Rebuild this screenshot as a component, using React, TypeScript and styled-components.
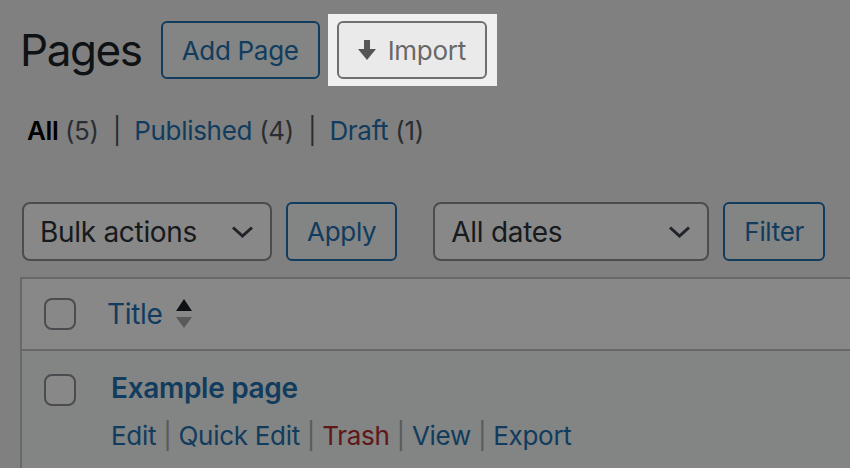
import styled, { createGlobalStyle } from "styled-components";

const GlobalStyle = createGlobalStyle`
  html, body {
    margin: 0;
    padding: 0;
    background: #f0f0f1;
    font-family: Inter, "Noto Sans", "Liberation Sans", sans-serif;
    letter-spacing: -0.3px;
    color: #3c434a;
  }
`;

const Wrap = styled.div`
  width: 850px;
  height: 468px;
  padding-left: 20px;
  box-sizing: border-box;
  overflow: hidden;
`;

const Header = styled.div`
  display: flex;
  align-items: center;
  margin-top: 14px;
  height: 72px;
`;

const Title = styled.h1`
  margin: 0 19px 0 0;
  font-size: 44px;
  font-weight: 400;
  color: #1d2327;
  letter-spacing: -1.4px;
  line-height: 58px;
`;

const ActionButton = styled.a`
  display: inline-flex;
  align-items: center;
  gap: 12px;
  height: 58px;
  box-sizing: border-box;
  padding: 0 19px;
  border: 2px solid #2271b1;
  border-radius: 6px;
  background: #f6f7f7;
  color: #2271b1;
  font-size: 26px;
  text-decoration: none;
`;

/* the one control left out of the dimmed page */
const Spotlight = styled.div`
  position: relative;
  z-index: 1;
  margin-left: 8px;
  padding: 7px 10px 7px 9px;
  background: #f0f0f1;
  box-shadow: 0 0 0 3000px rgba(0, 0, 0, 0.465);
`;

const ImportButton = styled(ActionButton)`
  border-color: #707070;
  background: #eaeaea;
  color: #686868;
`;

const Views = styled.ul`
  list-style: none;
  margin: 25px 0 0 7px;
  padding: 0;
  display: flex;
  font-size: 26px;
  line-height: 40px;
`;

const View = styled.li`
  white-space: nowrap;
`;

const ViewLink = styled.a<{ $current?: boolean }>`
  color: ${(p) => (p.$current ? "#000" : "#2271b1")};
  font-weight: ${(p) => (p.$current ? 600 : 400)};
  text-decoration: none;
`;

const Count = styled.span`
  color: #50575e;
  font-weight: 400;
`;

const ViewSep = styled.span`
  color: #50575e;
  padding: 0 13px 0 14px;
`;

const TableNav = styled.div`
  display: flex;
  align-items: center;
  margin: 51px 0 0 2px;
  height: 59px;
`;

const NavGroup = styled.div`
  display: flex;
  gap: 14px;
  margin-right: 36px;
`;

const Select = styled.div<{ $width: number }>`
  display: flex;
  align-items: center;
  justify-content: space-between;
  width: ${(p) => p.$width}px;
  height: 59px;
  box-sizing: border-box;
  padding: 0 16px;
  border: 2px solid #8c8f94;
  border-radius: 8px;
  background: #fff;
  color: #2c3338;
  font-size: 28px;
`;

const NavButton = styled(ActionButton)`
  height: 59px;
`;

const Table = styled.div`
  margin-top: 16px;
  width: 1000px;
  border: 2px solid #c3c4c7;
`;

const HeadRow = styled.div`
  display: flex;
  align-items: center;
  height: 70px;
  background: #fff;
  border-bottom: 2px solid #c3c4c7;
`;

const BodyRow = styled.div`
  display: flex;
  align-items: flex-start;
  height: 140px;
  background: #f6f7f7;
`;

const CheckCell = styled.div<{ $top?: number }>`
  width: 85px;
  padding: ${(p) => p.$top ?? 0}px 0 0 22px;
  box-sizing: border-box;
  flex-shrink: 0;
`;

const Checkbox = styled.span`
  display: block;
  width: 32px;
  height: 32px;
  box-sizing: border-box;
  border: 2px solid #8c8f94;
  border-radius: 8px;
  background: #fff;
`;

const SortLink = styled.a`
  display: flex;
  align-items: center;
  gap: 13px;
  color: #2271b1;
  font-size: 28px;
  text-decoration: none;
`;

const TitleCell = styled.div`
  padding: 17px 0 0 4px;
`;

const RowTitle = styled.a`
  display: block;
  color: #2271b1;
  font-size: 28px;
  font-weight: 600;
  line-height: 40px;
  text-decoration: none;
`;

const RowActions = styled.div`
  margin-top: 8px;
  font-size: 26px;
  line-height: 40px;
  color: #a7aaad;
  white-space: nowrap;
`;

const RowLink = styled.a<{ $danger?: boolean }>`
  color: ${(p) => (p.$danger ? "#b32d2e" : "#2271b1")};
  text-decoration: none;
`;

const RowSep = styled.span`
  padding: 0 7px;
`;

const Chevron = () => (
  <svg width="23" height="12" viewBox="0 0 23 12">
    <polyline points="2,1.5 11.5,10 21,1.5" fill="none" stroke="#3c434a" strokeWidth="3" />
  </svg>
);

const DownArrow = () => (
  <svg width="18" height="20" viewBox="0 0 18 20">
    <rect x="6" y="0" width="6" height="10" fill="#555" />
    <polygon points="0,9 18,9 9,20" fill="#555" />
  </svg>
);

const SortArrows = () => (
  <svg width="16" height="30" viewBox="0 0 16 30">
    <polygon points="8,0 16,12 0,12" fill="#1d2327" />
    <polygon points="0,18 16,18 8,29" fill="#a7aaad" />
  </svg>
);

const views = [
  { label: "All", count: 5, current: true },
  { label: "Published", count: 4 },
  { label: "Draft", count: 1 },
];

const rowActions = ["Edit", "Quick Edit", "Trash", "View", "Export"];

export default function App() {
  return (
    <>
      <GlobalStyle />
      <Wrap>
        <Header>
          <Title>Pages</Title>
          <ActionButton>Add Page</ActionButton>
          <Spotlight>
            <ImportButton>
              <DownArrow />
              Import
            </ImportButton>
          </Spotlight>
        </Header>

        <Views>
          {views.map((v, i) => (
            <View key={v.label}>
              <ViewLink $current={v.current}>
                {v.label} <Count>({v.count})</Count>
              </ViewLink>
              {i < views.length - 1 && <ViewSep>|</ViewSep>}
            </View>
          ))}
        </Views>

        <TableNav>
          <NavGroup>
            <Select $width={250}>
              Bulk actions
              <Chevron />
            </Select>
            <NavButton>Apply</NavButton>
          </NavGroup>
          <NavGroup>
            <Select $width={276}>
              All dates
              <Chevron />
            </Select>
            <NavButton>Filter</NavButton>
          </NavGroup>
        </TableNav>

        <Table>
          <HeadRow>
            <CheckCell>
              <Checkbox />
            </CheckCell>
            <SortLink>
              Title
              <SortArrows />
            </SortLink>
          </HeadRow>
          <BodyRow>
            <CheckCell $top={23}>
              <Checkbox />
            </CheckCell>
            <TitleCell>
              <RowTitle>Example page</RowTitle>
              <RowActions>
                {rowActions.map((a, i) => (
                  <span key={a}>
                    {i > 0 && <RowSep>|</RowSep>}
                    <RowLink $danger={a === "Trash"}>{a}</RowLink>
                  </span>
                ))}
              </RowActions>
            </TitleCell>
          </BodyRow>
        </Table>
      </Wrap>
    </>
  );
}
